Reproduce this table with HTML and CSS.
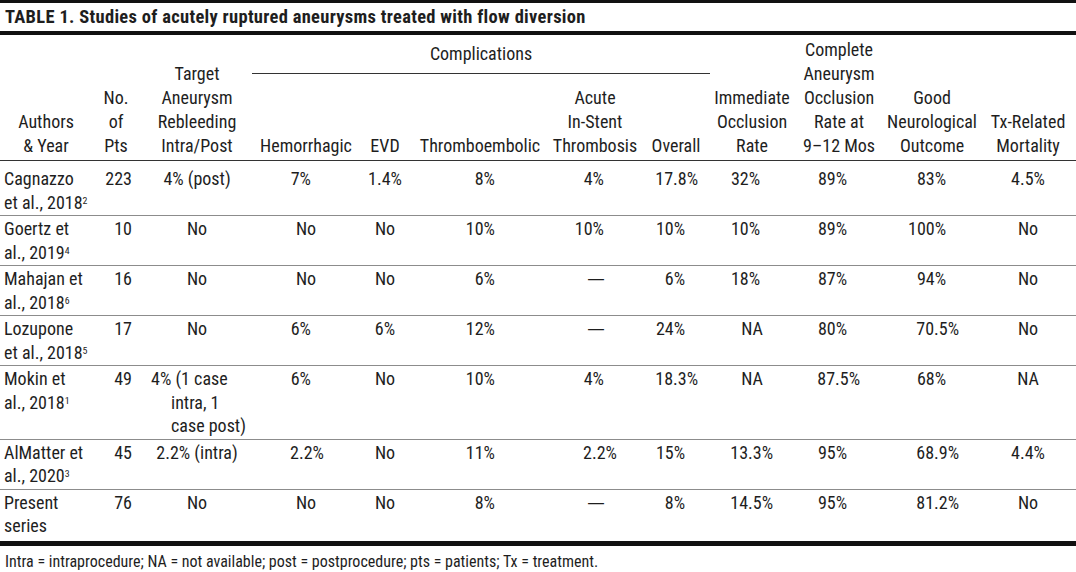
FILE: index.html
```html
<!DOCTYPE html>
<html lang="en">
<head>
<meta charset="utf-8">
<title>Table 1</title>
<link rel="stylesheet" href="styles.css">
</head>
<body>
<div class="caption">TABLE 1. Studies of acutely ruptured aneurysms treated with flow diversion</div>
<table class="tbl">
  <colgroup>
    <col class="c1"><col class="c2"><col class="c3"><col class="c4"><col class="c5"><col class="c6">
    <col class="c7"><col class="c8"><col class="c9"><col class="c10"><col class="c11"><col class="c12">
  </colgroup>
  <thead>
    <tr>
      <th rowspan="2">Authors<br>&amp; Year</th>
      <th rowspan="2">No.<br>of<br>Pts</th>
      <th rowspan="2">Target<br>Aneurysm<br>Rebleeding<br>Intra/Post</th>
      <th colspan="5" class="grp"><div class="grp-label">Complications</div></th>
      <th rowspan="2">Immediate<br>Occlusion<br>Rate</th>
      <th rowspan="2">Complete<br>Aneurysm<br>Occlusion<br>Rate at<br>9–12 Mos</th>
      <th rowspan="2">Good<br>Neurological<br>Outcome</th>
      <th rowspan="2">Tx-Related<br>Mortality</th>
    </tr>
    <tr>
      <th>Hemorrhagic</th>
      <th>EVD</th>
      <th>Thromboembolic</th>
      <th>Acute<br>In-Stent<br>Thrombosis</th>
      <th>Overall</th>
    </tr>
  </thead>
  <tbody>
    <tr>
      <td>Cagnazzo<br>et al., 2018<sup>2</sup></td>
      <td class="r">223</td>
      <td>4% (post)</td>
      <td class="r">7%</td>
      <td>1.4%</td>
      <td class="r">8%</td>
      <td class="r">4%</td>
      <td class="r d">17.8%</td>
      <td class="r">32%</td>
      <td class="r">89%</td>
      <td class="r">83%</td>
      <td>4.5%</td>
    </tr>
    <tr>
      <td>Goertz et<br>al., 2019<sup>4</sup></td>
      <td class="r">10</td>
      <td>No</td>
      <td>No</td>
      <td>No</td>
      <td class="r">10%</td>
      <td class="r">10%</td>
      <td class="r">10%</td>
      <td class="r">10%</td>
      <td class="r">89%</td>
      <td class="r">100%</td>
      <td>No</td>
    </tr>
    <tr>
      <td>Mahajan et<br>al., 2018<sup>6</sup></td>
      <td class="r">16</td>
      <td>No</td>
      <td>No</td>
      <td>No</td>
      <td class="r">6%</td>
      <td class="r dash">—</td>
      <td class="r">6%</td>
      <td class="r">18%</td>
      <td class="r">87%</td>
      <td class="r">94%</td>
      <td>No</td>
    </tr>
    <tr>
      <td>Lozupone<br>et al., 2018<sup>5</sup></td>
      <td class="r">17</td>
      <td>No</td>
      <td class="r">6%</td>
      <td>6%</td>
      <td class="r">12%</td>
      <td class="r dash">—</td>
      <td class="r">24%</td>
      <td>NA</td>
      <td class="r">80%</td>
      <td class="r d">70.5%</td>
      <td>No</td>
    </tr>
    <tr>
      <td>Mokin et<br>al., 2018<sup>1</sup></td>
      <td class="r">49</td>
      <td class="hang">4% (1 case<br>intra, 1<br>case post)</td>
      <td class="r">6%</td>
      <td>No</td>
      <td class="r">10%</td>
      <td class="r">4%</td>
      <td class="r d">18.3%</td>
      <td>NA</td>
      <td class="r d">87.5%</td>
      <td class="r">68%</td>
      <td>NA</td>
    </tr>
    <tr>
      <td>AlMatter et<br>al., 2020<sup>3</sup></td>
      <td class="r">45</td>
      <td>2.2% (intra)</td>
      <td class="r d">2.2%</td>
      <td>No</td>
      <td class="r">11%</td>
      <td class="r d">2.2%</td>
      <td class="r">15%</td>
      <td class="r d">13.3%</td>
      <td class="r">95%</td>
      <td class="r d">68.9%</td>
      <td>4.4%</td>
    </tr>
    <tr>
      <td>Present<br>series</td>
      <td class="r">76</td>
      <td>No</td>
      <td>No</td>
      <td>No</td>
      <td class="r">8%</td>
      <td class="r dash">—</td>
      <td class="r">8%</td>
      <td class="r d">14.5%</td>
      <td class="r">95%</td>
      <td class="r d">81.2%</td>
      <td>No</td>
    </tr>
  </tbody>
</table>
<p class="note">Intra = intraprocedure; NA = not available; post = postprocedure; pts = patients; Tx = treatment.</p>
</body>
</html>
```

FILE: styles.css
```css
html, body {
  margin: 0;
  padding: 0;
  background: #fff;
}

body {
  width: 1076px;
  color: #1e1e1e;
  font-family: "Roboto Condensed", "Liberation Sans", Arial, sans-serif;
}

.caption {
  border-top: 3px solid #111;
  border-bottom: 4px solid #111;
  padding: 4px 5px;
  font-weight: bold;
  font-size: 18.5px;
  letter-spacing: 0.3px;
  line-height: 20px;
}

.tbl {
  width: 1076px;
  border-collapse: collapse;
  table-layout: fixed;
  font-size: 18px;
  border-bottom: 5px solid #111;
}

.c1 { width: 92px; }
.c2 { width: 48px; }
.c3 { width: 114px; }
.c4 { width: 104px; }
.c5 { width: 54px; }
.c6 { width: 136px; }
.c7 { width: 94px; }
.c8 { width: 68px; }
.c9 { width: 84px; }
.c10 { width: 90px; }
.c11 { width: 96px; }
.c12 { width: 96px; }

.tbl th {
  font-weight: normal;
  line-height: 24px;
  vertical-align: bottom;
  text-align: center;
  padding: 3px 0 2px;
  white-space: nowrap;
}

.tbl th.grp {
  padding: 3px 0 0;
}

.grp-label {
  margin: 0 0 0 -2px;
  padding-bottom: 7px;
  border-bottom: 1px solid #333;
}

.tbl td {
  line-height: 23.5px;
  padding: 1px 0;
  vertical-align: top;
  text-align: center;
  border-bottom: 1px solid #8c8c8c;
  white-space: nowrap;
}

.tbl tbody tr:first-child td {
  border-top: 1px solid #333;
  padding-top: 6px;
  padding-bottom: 1px;
}

.tbl tbody tr:last-child td {
  border-bottom: none;
  padding-bottom: 3px;
}

.tbl td:nth-child(1) {
  text-align: left;
  padding-left: 4px;
}

.tbl td:nth-child(2) { --pr: 8px; }
.tbl td:nth-child(4) { --pr: 47px; }
.tbl td:nth-child(6) { --pr: 53px; }
.tbl td:nth-child(7) { --pr: 38px; }
.tbl td:nth-child(8) { --pr: 25px; }
.tbl td:nth-child(9) { --pr: 34px; }
.tbl td:nth-child(10) { --pr: 37px; }
.tbl td:nth-child(11) { --pr: 34px; }

.tbl td.r {
  text-align: right;
  padding-right: var(--pr);
}

.tbl td.r.d {
  padding-right: calc(var(--pr) - 13px);
}

.tbl td.dash {
  font-family: "Liberation Sans", Arial, sans-serif;
  font-size: 16px;
}

.tbl td.hang {
  text-align: left;
  padding-left: 31px;
  text-indent: -20px;
}

sup {
  font-size: 0.55em;
  line-height: 0;
  vertical-align: 0.55em;
}

.note {
  margin: 7px 0 0;
  padding-left: 5px;
  font-size: 16px;
  line-height: 18px;
}
```
